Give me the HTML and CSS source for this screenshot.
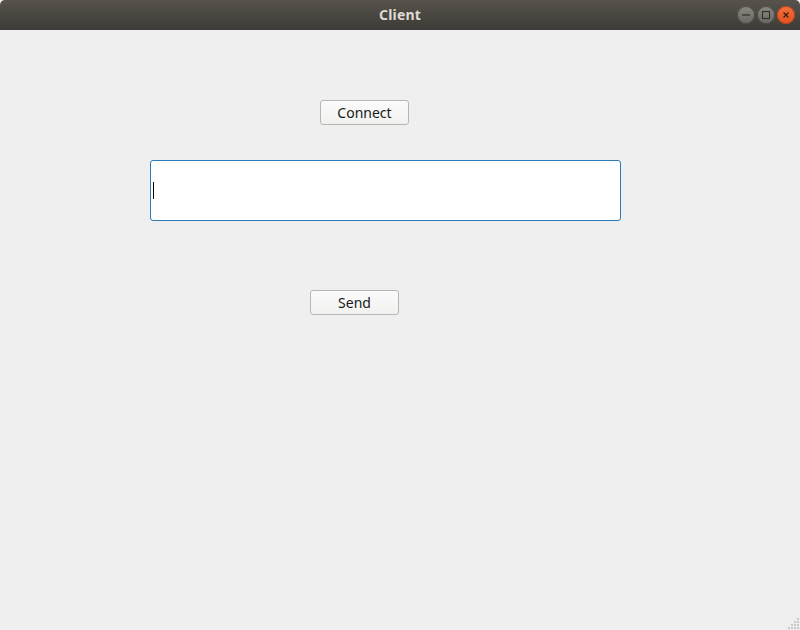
FILE: index.html
```html
<!DOCTYPE html>
<html>
<head>
<meta charset="utf-8">
<link rel="stylesheet" href="styles.css">
</head>
<body>
<div class="window">
  <div class="titlebar">
    <span class="title">Client</span>
    <div class="controls">
      <span class="wbtn min"><svg width="18" height="18" viewBox="0 0 18 18"><line x1="5" y1="9" x2="13" y2="9" stroke="#2f2e2a" stroke-width="1.2"/></svg></span>
      <span class="wbtn max"><svg width="18" height="18" viewBox="0 0 18 18"><rect x="5.5" y="5.5" width="7" height="7" fill="none" stroke="#2f2e2a" stroke-width="1.1"/></svg></span>
      <span class="wbtn close"><svg width="18" height="18" viewBox="0 0 18 18"><path d="M6.5 6.5 L11.5 11.5 M11.5 6.5 L6.5 11.5" stroke="#3a1a0e" stroke-width="1.2"/></svg></span>
    </div>
  </div>
  <div class="content">
    <button class="btn connect">Connect</button>
    <div class="lineedit"><span class="caret"></span></div>
    <button class="btn send">Send</button>
    <svg class="grip" width="14" height="14" viewBox="0 0 14 14">
      <g fill="#c8c8c8">
        <rect x="11" y="2" width="2" height="2"/>
        <rect x="8" y="5" width="2" height="2"/><rect x="11" y="5" width="2" height="2"/>
        <rect x="5" y="8" width="2" height="2"/><rect x="8" y="8" width="2" height="2"/><rect x="11" y="8" width="2" height="2"/>
        <rect x="2" y="11" width="2" height="2"/><rect x="5" y="11" width="2" height="2"/><rect x="8" y="11" width="2" height="2"/><rect x="11" y="11" width="2" height="2"/>
      </g>
    </svg>
  </div>
</div>
</body>
</html>
```
FILE: styles.css
```css
html, body {
  margin: 0;
  padding: 0;
  width: 800px;
  height: 630px;
  overflow: hidden;
  background: #efefef;
  font-family: "Noto Sans", "DejaVu Sans", sans-serif;
}
.window {
  width: 800px;
  height: 630px;
  display: flex;
  flex-direction: column;
}
.titlebar {
  height: 30px;
  flex: none;
  background: linear-gradient(#57534c, #3d3b37);
  border-radius: 5px 5px 0 0;
  position: relative;
  display: flex;
  align-items: center;
  justify-content: center;
}
.title {
  color: #dfdbd2;
  font-weight: bold;
  font-size: 14px;
  letter-spacing: 0.2px;
  margin-bottom: 2px;
}
.controls {
  position: absolute;
  right: 5px;
  top: 6px;
  display: flex;
  gap: 2px;
}
.wbtn {
  width: 18px;
  height: 18px;
  border-radius: 50%;
  display: flex;
  background: linear-gradient(#8a8780, #6a6862);
  box-shadow: inset 0 0 0 1px #4a4844;
}
.wbtn.close {
  background: linear-gradient(#f4703e, #e3501f);
  box-shadow: inset 0 0 0 1px #b8441c;
}
.content {
  flex: 1;
  position: relative;
  display: flex;
  flex-direction: column;
  align-items: flex-start;
}
.btn {
  box-sizing: border-box;
  width: 89px;
  height: 25px;
  border: 1px solid #b6b6b3;
  border-radius: 3px;
  background: linear-gradient(#fbfbfb, #f1f1f0);
  font-family: "Noto Sans", "DejaVu Sans", sans-serif;
  font-size: 14px;
  color: #1a1a1a;
  padding: 0;
  line-height: 22px;
}
.connect {
  margin: 70px 0 0 320px;
}
.lineedit {
  box-sizing: border-box;
  margin: 35px 0 0 150px;
  width: 471px;
  height: 61px;
  background: #fff;
  border: 1px solid #2c7ab8;
  border-radius: 3px;
  display: flex;
  align-items: center;
  padding-left: 2px;
}
.caret {
  width: 1px;
  height: 17px;
  background: #000;
}
.send {
  margin: 69px 0 0 310px;
}
.grip {
  position: absolute;
  right: 0;
  bottom: 0;
}
```
